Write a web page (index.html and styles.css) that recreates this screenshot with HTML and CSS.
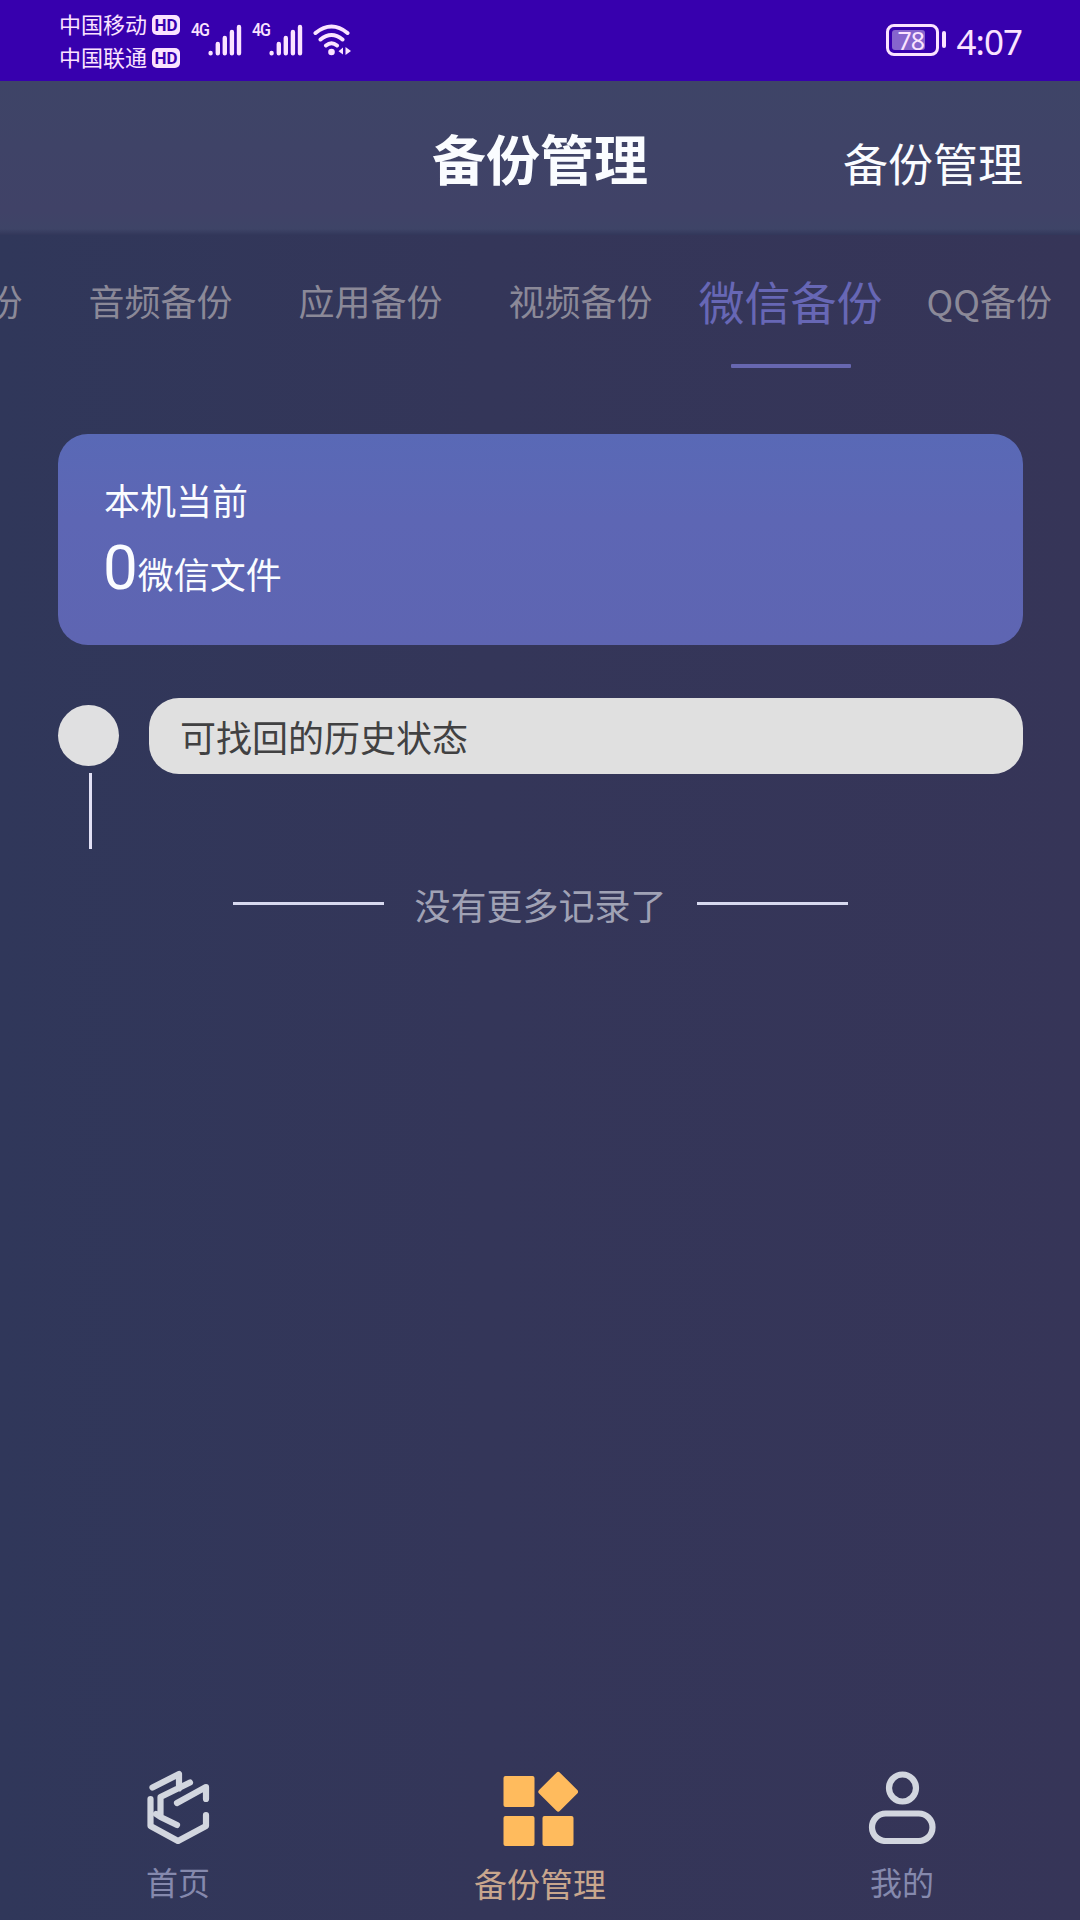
FILE: index.html
```html
<!DOCTYPE html>
<html lang="zh-CN">
  <head>
    <meta charset="utf-8" />
    <meta name="viewport" content="width=device-width" />
    <title>备份管理</title>
    <link rel="stylesheet" href="styles.css">
  </head>
  <body>
    <div class="status">
      <div class="carriers">
        <div class="carrier">中国移动<span class="hd">HD</span></div>
        <div class="carrier">中国联通<span class="hd">HD</span></div>
      </div>
      <div class="signal">
        <span class="net">4G</span>
        <svg width="34" height="32" viewBox="0 0 34 32" stroke="#fbe3ff" stroke-width="4.4" stroke-linecap="round">
          <path d="M2.6 29v.2M9.8 20v9.2M16.8 14v15.2M23.9 8v21.2M31 3v26.2" />
        </svg>
      </div>
      <div class="signal">
        <span class="net">4G</span>
        <svg width="34" height="32" viewBox="0 0 34 32" stroke="#fbe3ff" stroke-width="4.4" stroke-linecap="round">
          <path d="M2.6 29v.2M9.8 20v9.2M16.8 14v15.2M23.9 8v21.2M31 3v26.2" />
        </svg>
      </div>
      <svg class="wifi" width="39" height="32" viewBox="0 0 39 32" fill="none" stroke="#fbe3ff" stroke-width="4" stroke-linecap="round">
        <path d="M2.500 9Q18.500 -4 34.500 9M7.500 15.500Q18.500 6.500 29.500 15.500M13 21.500Q18.500 17 24 21.500" />
        <circle cx="18.500" cy="28" r="3.300" fill="#fbe3ff" stroke="none" />
        <path d="M30 23.500v7l-4.500-3.200zM32.500 23v8l5.500-4z" fill="#fbe3ff" stroke="none" />
      </svg>
      <div class="battery"><span class="level">78</span></div>
      <div class="time">4:07</div>
    </div>

    <header class="header">
      <h1 class="title">备份管理</h1>
      <a class="action">备份管理</a>
    </header>

    <nav class="tabs">
      <a class="tab">图片备份</a>
      <a class="tab">音频备份</a>
      <a class="tab">应用备份</a>
      <a class="tab">视频备份</a>
      <a class="tab active">微信备份</a>
      <a class="tab">QQ备份</a>
    </nav>

    <main class="content">
      <section class="card">
        <div>本机当前</div>
        <div class="count"><span class="number">0</span>微信文件</div>
      </section>
      <section class="history">
        <div class="rail">
          <div class="dot"></div>
          <div class="line"></div>
        </div>
        <div class="pill">可找回的历史状态</div>
      </section>
      <div class="empty">没有更多记录了</div>
    </main>

    <footer class="bottom">
      <a class="item">
        <svg width="64" height="74" viewBox="0 0 64 74" fill="none" stroke="#d2d6df" stroke-width="6.200" stroke-linecap="round" stroke-linejoin="round">
          <path d="M6.500 17.500L33 4V18.500M44 12.500L14.500 27V47L31 55M10 44L14.500 47" />
          <path d="M4.500 29V56L32 71L60 56V45M60 29V17L31 33" />
        </svg>
        <span>首页</span>
      </a>
      <a class="item current">
        <svg width="76" height="76" viewBox="0 0 76 76" fill="#ffbb5d">
          <rect x="1.500" y="6" width="31" height="31" rx="2" />
          <rect x="1.500" y="46" width="31" height="30" rx="2" />
          <rect x="40.500" y="46" width="31" height="30" rx="2" />
          <rect x="41.500" y="7" width="29.500" height="29.500" rx="2.500" transform="rotate(45 56.200 21.700)" />
        </svg>
        <span>备份管理</span>
      </a>
      <a class="item">
        <svg width="68" height="74" viewBox="0 0 68 74" fill="none" stroke="#d2d6df" stroke-width="6.200">
          <circle cx="34.500" cy="18" r="13.500" />
          <rect x="4" y="43.500" width="60.500" height="27.500" rx="13.750" />
        </svg>
        <span>我的</span>
      </a>
    </footer>
  </body>
</html>
```

FILE: styles.css
```css
* {
  box-sizing: border-box;
}
body {
  display: flex;
  flex-direction: column;
  margin: 0;
  height: 1920px;
  overflow: hidden;
  font: 400 36px/54px "Noto Sans CJK SC", sans-serif;
  color: #fafcff;
  background: linear-gradient(90deg, #30375a, #343659 45%, #363558);
}

/* system status bar */
.status {
  display: flex;
  align-items: flex-start;
  height: 81px;
  padding: 7px 58px 0 59px;
  background: #3700ae;
  color: #fbe3ff;
}
.carriers {
  width: 132px;
}
.carrier {
  display: flex;
  align-items: center;
  gap: 5px;
  height: 33px;
  font-size: 22px;
  line-height: 33px;
  white-space: nowrap;
}
.hd {
  width: 28px;
  height: 20px;
  margin-top: 2px;
  border-radius: 5px;
  background: #fbe3ff;
  color: #3700ae;
  font: 700 17px/20px Roboto, sans-serif;
  text-align: center;
}
.signal {
  display: flex;
  width: 61px;
  margin-top: 17px;
}
.net {
  width: 17px;
  font: 500 16px/16px Roboto, sans-serif;
  letter-spacing: -1px;
  transform: scaleY(1.2);
}
.wifi {
  margin-top: 17px;
}
.battery {
  position: relative;
  width: 53px;
  height: 32px;
  margin: 17px 18px 0 auto;
  padding: 3px;
  border: 3px solid #fbe3ff;
  border-radius: 8px;
}
.battery::after {
  content: "";
  position: absolute;
  left: 53px;
  top: 4px;
  width: 4px;
  height: 17px;
  border-radius: 2px;
  background: #fbe3ff;
}
.level {
  display: block;
  width: 33px;
  height: 20px;
  border-radius: 3px;
  background: #8665cd;
  font: 400 25px/20px "Noto Sans", sans-serif;
  letter-spacing: -1px;
  text-indent: 6px;
  white-space: nowrap;
}
.time {
  margin-top: 10px;
  font: 400 35px/50px "Noto Sans", sans-serif;
  letter-spacing: -1px;
}

.header {
  display: grid;
  grid-template-columns: 1fr auto 1fr;
  height: 154px;
  padding: 0 57px;
  background: linear-gradient(#3e4467, #404267 85%, #3e4467 96%, #32375a);
}
.title {
  grid-column: 2;
  margin: 37px 0 0;
  font-size: 54px;
  line-height: 80px;
}
.action {
  justify-self: end;
  margin-top: 48px;
  font-size: 45px;
  line-height: 68px;
}

.tabs {
  display: flex;
  justify-content: flex-end;
  height: 199px;
  padding: 37px 28px 0 0;
  gap: 66px;
  color: #8b8998;
  line-height: 57px;
  white-space: nowrap;
}
.active {
  display: flex;
  flex-direction: column;
  align-items: center;
  margin: 0 -22px 0 -20px;
  color: #6767b5;
  font-size: 46px;
}
.active::after {
  content: "";
  width: 120px;
  height: 4px;
  margin-top: 35px;
  border-radius: 1px;
  background: #6767b0;
}

.content {
  flex: 1;
  padding: 0 57px 0 58px;
}
.card {
  height: 211px;
  padding: 38px 46px;
  border-radius: 30px;
  background: linear-gradient(#5969b6, #5d66b4 40%, #5e65b2);
}
.count {
  display: flex;
  align-items: baseline;
  margin: 3px 0 0 -1px;
  line-height: 78px;
}
.number {
  font-family: Roboto, sans-serif;
  font-size: 62px;
}
.history {
  display: flex;
  gap: 30px;
  margin-top: 53px;
}
.rail {
  display: flex;
  flex-direction: column;
  align-items: center;
  gap: 7px;
  width: 61px;
  padding-top: 7px;
}
.dot {
  width: 61px;
  height: 61px;
  border-radius: 50%;
  background: #e0e0e1;
}
.line {
  width: 3px;
  height: 76px;
  margin-left: 3px;
  background: #e2e1f5;
}
.pill {
  flex: 1;
  height: 76px;
  padding-left: 31px;
  border-radius: 30px;
  background: #e0e0e0;
  color: #414142;
  line-height: 76px;
}
.empty {
  display: flex;
  justify-content: center;
  align-items: center;
  gap: 30px;
  margin-top: 28px;
  color: #a0a2b5;
}
.empty::before,
.empty::after {
  content: "";
  width: 151px;
  height: 3px;
  margin-top: -2px;
  background: #d7d9ef;
}

.bottom {
  display: flex;
  justify-content: space-between;
  height: 152px;
  padding: 0 112px;
}
.item {
  display: flex;
  flex-direction: column;
  align-items: center;
  width: 132px;
  padding-top: 2px;
  gap: 13px;
  color: #8589ad;
  font-size: 32px;
  line-height: 48px;
  white-space: nowrap;
}
.current {
  color: #c8a68d;
  font-size: 33px;
}
```
